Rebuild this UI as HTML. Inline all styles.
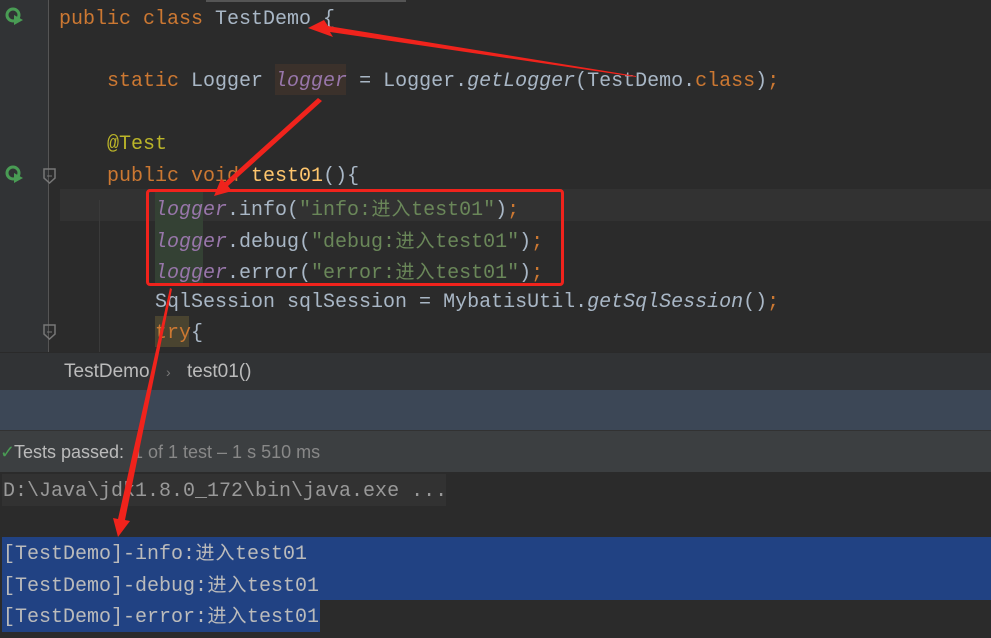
<!DOCTYPE html>
<html><head><meta charset="utf-8"><style>
*{margin:0;padding:0;box-sizing:border-box}
body{width:991px;height:638px;background:#2b2b2b;overflow:hidden;position:relative;font-family:"Liberation Mono","Noto Sans CJK SC",monospace;font-size:20px;color:#a9b7c6}
.ln{position:absolute;left:59px;height:31px;line-height:31px;white-space:pre}
.k{color:#cc7832}.p{color:#9876aa;font-style:italic}.s{color:#6a8759}.a{color:#bbb529}.f{color:#ffc66d}.i{font-style:italic}
.c{display:inline-block;width:20px;text-align:center;font-family:"Noto Sans CJK SC",sans-serif;font-size:19px}
.con{position:absolute;left:3px;height:31px;line-height:31px;white-space:pre;color:#bbbbbb}
</style></head><body>
<div style="position:absolute;left:0;top:0;width:48px;height:352px;background:#313335"></div>
<div style="position:absolute;left:48px;top:0;width:1px;height:352px;background:#555"></div>
<div style="position:absolute;left:206px;top:0;width:200px;height:2px;background:#555"></div>
<div style="position:absolute;left:60px;top:189px;width:931px;height:32px;background:#323232"></div>
<div style="position:absolute;left:155px;top:190px;width:48px;height:94px;background:#344134"></div>
<div style="position:absolute;left:275px;top:64px;width:71px;height:31px;background:#3b312b"></div>
<div style="position:absolute;left:155px;top:316px;width:34px;height:31px;background:#4a4430"></div>
<div style="position:absolute;left:99px;top:200px;width:1px;height:152px;background:#3a3a3a"></div>
<svg style="position:absolute;left:4px;top:6px" width="22" height="22"><circle cx="9" cy="9" r="6" fill="none" stroke="#499c54" stroke-width="3"/><path d="M10 9 L19 14 L10 19Z" fill="#499c54"/></svg>
<svg style="position:absolute;left:4px;top:164px" width="22" height="22"><circle cx="9" cy="9" r="6" fill="none" stroke="#499c54" stroke-width="3"/><path d="M10 9 L19 14 L10 19Z" fill="#499c54"/></svg>
<svg style="position:absolute;left:42px;top:168px" width="16" height="18"><path d="M2 1H13V10L7.5 15L2 10Z" fill="none" stroke="#777" stroke-width="1.5"/><path d="M5 8H10" stroke="#777"/></svg>
<svg style="position:absolute;left:42px;top:324px" width="16" height="18"><path d="M2 1H13V10L7.5 15L2 10Z" fill="none" stroke="#777" stroke-width="1.5"/><path d="M5 8H10" stroke="#777"/></svg>
<div class="ln" style="top:4px"><span class="k">public class </span>TestDemo {</div>
<div class="ln" style="top:66px">    <span class="k">static </span>Logger <span class="p">logger</span> = Logger.<span class="i">getLogger</span>(TestDemo.<span class="k">class</span>)<span class="k">;</span></div>
<div class="ln" style="top:129px">    <span class="a">@Test</span></div>
<div class="ln" style="top:161px">    <span class="k">public void </span><span class="f">test01</span>(){</div>
<div class="ln" style="top:192px">        <span class="p">logger</span>.info(<span class="s">"info:<span class="c">进</span><span class="c">入</span>test01"</span>)<span class="k">;</span></div>
<div class="ln" style="top:224px">        <span class="p">logger</span>.debug(<span class="s">"debug:<span class="c">进</span><span class="c">入</span>test01"</span>)<span class="k">;</span></div>
<div class="ln" style="top:255px">        <span class="p">logger</span>.error(<span class="s">"error:<span class="c">进</span><span class="c">入</span>test01"</span>)<span class="k">;</span></div>
<div class="ln" style="top:287px">        SqlSession sqlSession = MybatisUtil.<span class="i">getSqlSession</span>()<span class="k">;</span></div>
<div class="ln" style="top:318px">        <span class="k">try</span>{</div>
<div style="position:absolute;left:146px;top:189px;width:418px;height:97px;border:3px solid #f0231c;border-radius:4px"></div>
<div style="position:absolute;left:0;top:352px;width:991px;height:38px;background:#313335;border-top:1px solid #2a2a2a;font-family:'Liberation Sans',sans-serif;font-size:19px;color:#bbb;line-height:38px"><span style="position:absolute;left:64px">TestDemo</span><span style="position:absolute;left:166px;color:#777;font-size:14px">›</span><span style="position:absolute;left:187px">test01()</span></div>
<div style="position:absolute;left:0;top:390px;width:991px;height:40px;background:#3c4756"></div>
<div style="position:absolute;left:0;top:430px;width:991px;height:42px;background:#3c3f41;border-top:1px solid #323232;font-family:'Liberation Sans',sans-serif;font-size:18px;line-height:42px;color:#bbb"><span style="position:absolute;left:0;color:#499c54">✓</span><span style="position:absolute;left:14px">Tests passed: </span><span style="position:absolute;left:133px;color:#888">1 of 1 test – 1 s 510 ms</span></div>
<div style="position:absolute;left:2px;top:474px;width:444px;height:32px;background:#323232"></div>
<div class="con" style="top:476px;color:#999">D:\Java\jdk1.8.0_172\bin\java.exe ...</div>
<div style="position:absolute;left:2px;top:537px;width:989px;height:63px;background:#214283"></div>
<div style="position:absolute;left:2px;top:600px;width:318px;height:32px;background:#214283"></div>
<div class="con" style="top:536px">[TestDemo]-info:<span class="c">进</span><span class="c">入</span>test01</div>
<div class="con" style="top:568px">[TestDemo]-debug:<span class="c">进</span><span class="c">入</span>test01</div>
<div class="con" style="top:599px">[TestDemo]-error:<span class="c">进</span><span class="c">入</span>test01</div>
<svg style="position:absolute;left:0;top:0" width="991" height="638">
<g fill="#f0231c">
<path d="M636 77 L330 32 L333 37 L308 28 L324 20 L328 26 L636 76Z"/>
<path d="M318 98 L322 101 L228 186 L232 191 L214 196 L221 179 L225 182Z"/>
<path d="M170 288 L172 289 L125 520 L130 521 L118 537 L113 518 L118 519Z"/>
</g></svg>
</body></html>
